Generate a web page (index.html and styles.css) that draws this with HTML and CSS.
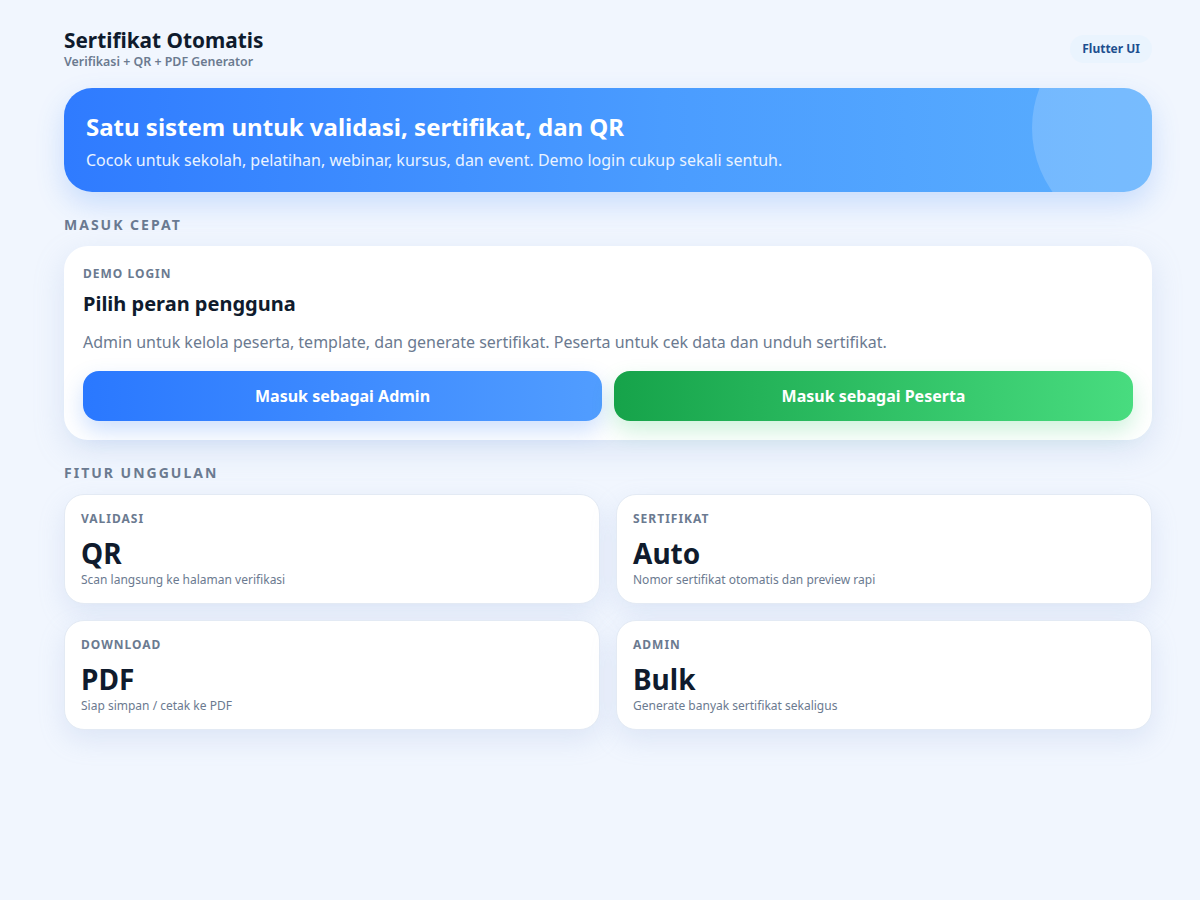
FILE: index.html
```html
<!DOCTYPE html>
<html lang="id">
<head>
<meta charset="utf-8">
<title>Sertifikat Otomatis</title>
<link rel="stylesheet" href="styles.css">
</head>
<body>
<main class="page">
  <header class="topbar">
    <div class="brand">
      <h1 class="brand-title">Sertifikat Otomatis</h1>
      <p class="brand-sub">Verifikasi + QR + PDF Generator</p>
    </div>
    <span class="chip">Flutter UI</span>
  </header>

  <section class="hero">
    <div class="hero-orb"></div>
    <h2 class="hero-title">Satu sistem untuk validasi, sertifikat, dan QR</h2>
    <p class="hero-text">Cocok untuk sekolah, pelatihan, webinar, kursus, dan event. Demo login cukup sekali sentuh.</p>
  </section>

  <h3 class="section-label">MASUK CEPAT</h3>
  <section class="login-card">
    <div class="eyebrow">DEMO LOGIN</div>
    <div class="login-title">Pilih peran pengguna</div>
    <p class="login-text">Admin untuk kelola peserta, template, dan generate sertifikat. Peserta untuk cek data dan unduh sertifikat.</p>
    <div class="login-actions">
      <button class="btn btn-admin">Masuk sebagai Admin</button>
      <button class="btn btn-peserta">Masuk sebagai Peserta</button>
    </div>
  </section>

  <h3 class="section-label">FITUR UNGGULAN</h3>
  <section class="features">
    <div class="feature">
      <div class="eyebrow">VALIDASI</div>
      <div class="feature-value">QR</div>
      <div class="feature-text">Scan langsung ke halaman verifikasi</div>
    </div>
    <div class="feature">
      <div class="eyebrow">SERTIFIKAT</div>
      <div class="feature-value">Auto</div>
      <div class="feature-text">Nomor sertifikat otomatis dan preview rapi</div>
    </div>
    <div class="feature">
      <div class="eyebrow">DOWNLOAD</div>
      <div class="feature-value">PDF</div>
      <div class="feature-text">Siap simpan / cetak ke PDF</div>
    </div>
    <div class="feature">
      <div class="eyebrow">ADMIN</div>
      <div class="feature-value">Bulk</div>
      <div class="feature-text">Generate banyak sertifikat sekaligus</div>
    </div>
  </section>
</main>
</body>
</html>
```

FILE: styles.css
```css
* { box-sizing: border-box; }

html, body {
  margin: 0;
  padding: 0;
}

body {
  background: #f1f6fe;
  font-family: "Noto Sans", "Open Sans", sans-serif;
  color: #0f1b2d;
  min-height: 900px;
}

.page {
  width: 1088px;
  margin-left: 64px;
  padding-top: 28px;
}

/* header */
.topbar {
  display: flex;
  justify-content: space-between;
  align-items: center;
}

.brand-title {
  margin: 0;
  font-size: 20.8px;
  line-height: 24px;
  font-weight: 700;
  color: #0f1b2d;
}

.brand-sub {
  margin: 2px 0 0;
  font-size: 12.4px;
  line-height: 16px;
  font-weight: 600;
  color: #6b7a90;
}

.chip {
  background: #eaf4fe;
  color: #1d4f8f;
  font-size: 12px;
  font-weight: 700;
  padding: 6px 12px;
  border-radius: 999px;
  line-height: 16px;
}

/* hero banner */
.hero {
  position: relative;
  overflow: hidden;
  margin-top: 18px;
  height: 104px;
  border-radius: 28px;
  padding: 23px 22px;
  background: linear-gradient(90deg, #2f7bff 0%, #4a9cff 55%, #5aaefe 100%);
  box-shadow: 0 12px 28px rgba(59, 130, 246, 0.22);
  color: #fff;
}

.hero-orb {
  position: absolute;
  width: 220px;
  height: 220px;
  border-radius: 50%;
  left: 968px;
  top: -70px;
  background: rgba(255, 255, 255, 0.18);
}

.hero-title {
  position: relative;
  margin: 0;
  font-size: 24px;
  line-height: 32px;
  font-weight: 700;
}

.hero-text {
  position: relative;
  margin: 6px 0 0;
  font-size: 16px;
  line-height: 22px;
  color: #eaf3ff;
}

/* section labels */
.section-label {
  margin: 23px 0 11px;
  font-size: 14px;
  line-height: 20px;
  font-weight: 700;
  letter-spacing: 2px;
  color: #6b7a90;
}

.eyebrow {
  font-size: 12px;
  line-height: 16px;
  font-weight: 700;
  letter-spacing: 1px;
  color: #6b7a90;
}

/* login card */
.login-card {
  background: #fff;
  border-radius: 24px;
  padding: 20px 19px 19px;
  box-shadow: 0 10px 30px rgba(148, 175, 220, 0.25);
}

.login-title {
  margin-top: 9px;
  font-size: 20px;
  line-height: 26px;
  font-weight: 700;
  color: #0f1b2d;
}

.login-text {
  margin: 13px 0 0;
  font-size: 16px;
  line-height: 24px;
  color: #6b7a90;
}

.login-actions {
  display: flex;
  gap: 12px;
  margin-top: 17px;
}

.btn {
  flex: 1;
  height: 50px;
  border: 0;
  border-radius: 16px;
  color: #fff;
  font-family: inherit;
  font-size: 16px;
  font-weight: 700;
}

.btn-admin {
  background: linear-gradient(90deg, #2a78ff 0%, #519dff 100%);
  box-shadow: 0 10px 22px rgba(59, 130, 246, 0.25);
}

.btn-peserta {
  background: linear-gradient(90deg, #16a34a 0%, #48dc7f 100%);
  box-shadow: 0 10px 22px rgba(34, 197, 94, 0.22);
}

/* feature grid */
.features {
  display: grid;
  grid-template-columns: 1fr 1fr;
  gap: 16px;
}

.feature {
  background: #fff;
  border: 1px solid #e3eaf4;
  border-radius: 20px;
  height: 110px;
  padding: 16px 16px;
  box-shadow: 0 10px 26px rgba(148, 175, 220, 0.22);
}

.feature-value {
  margin-top: 9px;
  font-size: 28px;
  line-height: 34px;
  font-weight: 700;
  color: #0f1b2d;
}

.feature-text {
  margin-top: 2px;
  font-size: 12px;
  line-height: 16px;
  color: #6b7a90;
}
```
